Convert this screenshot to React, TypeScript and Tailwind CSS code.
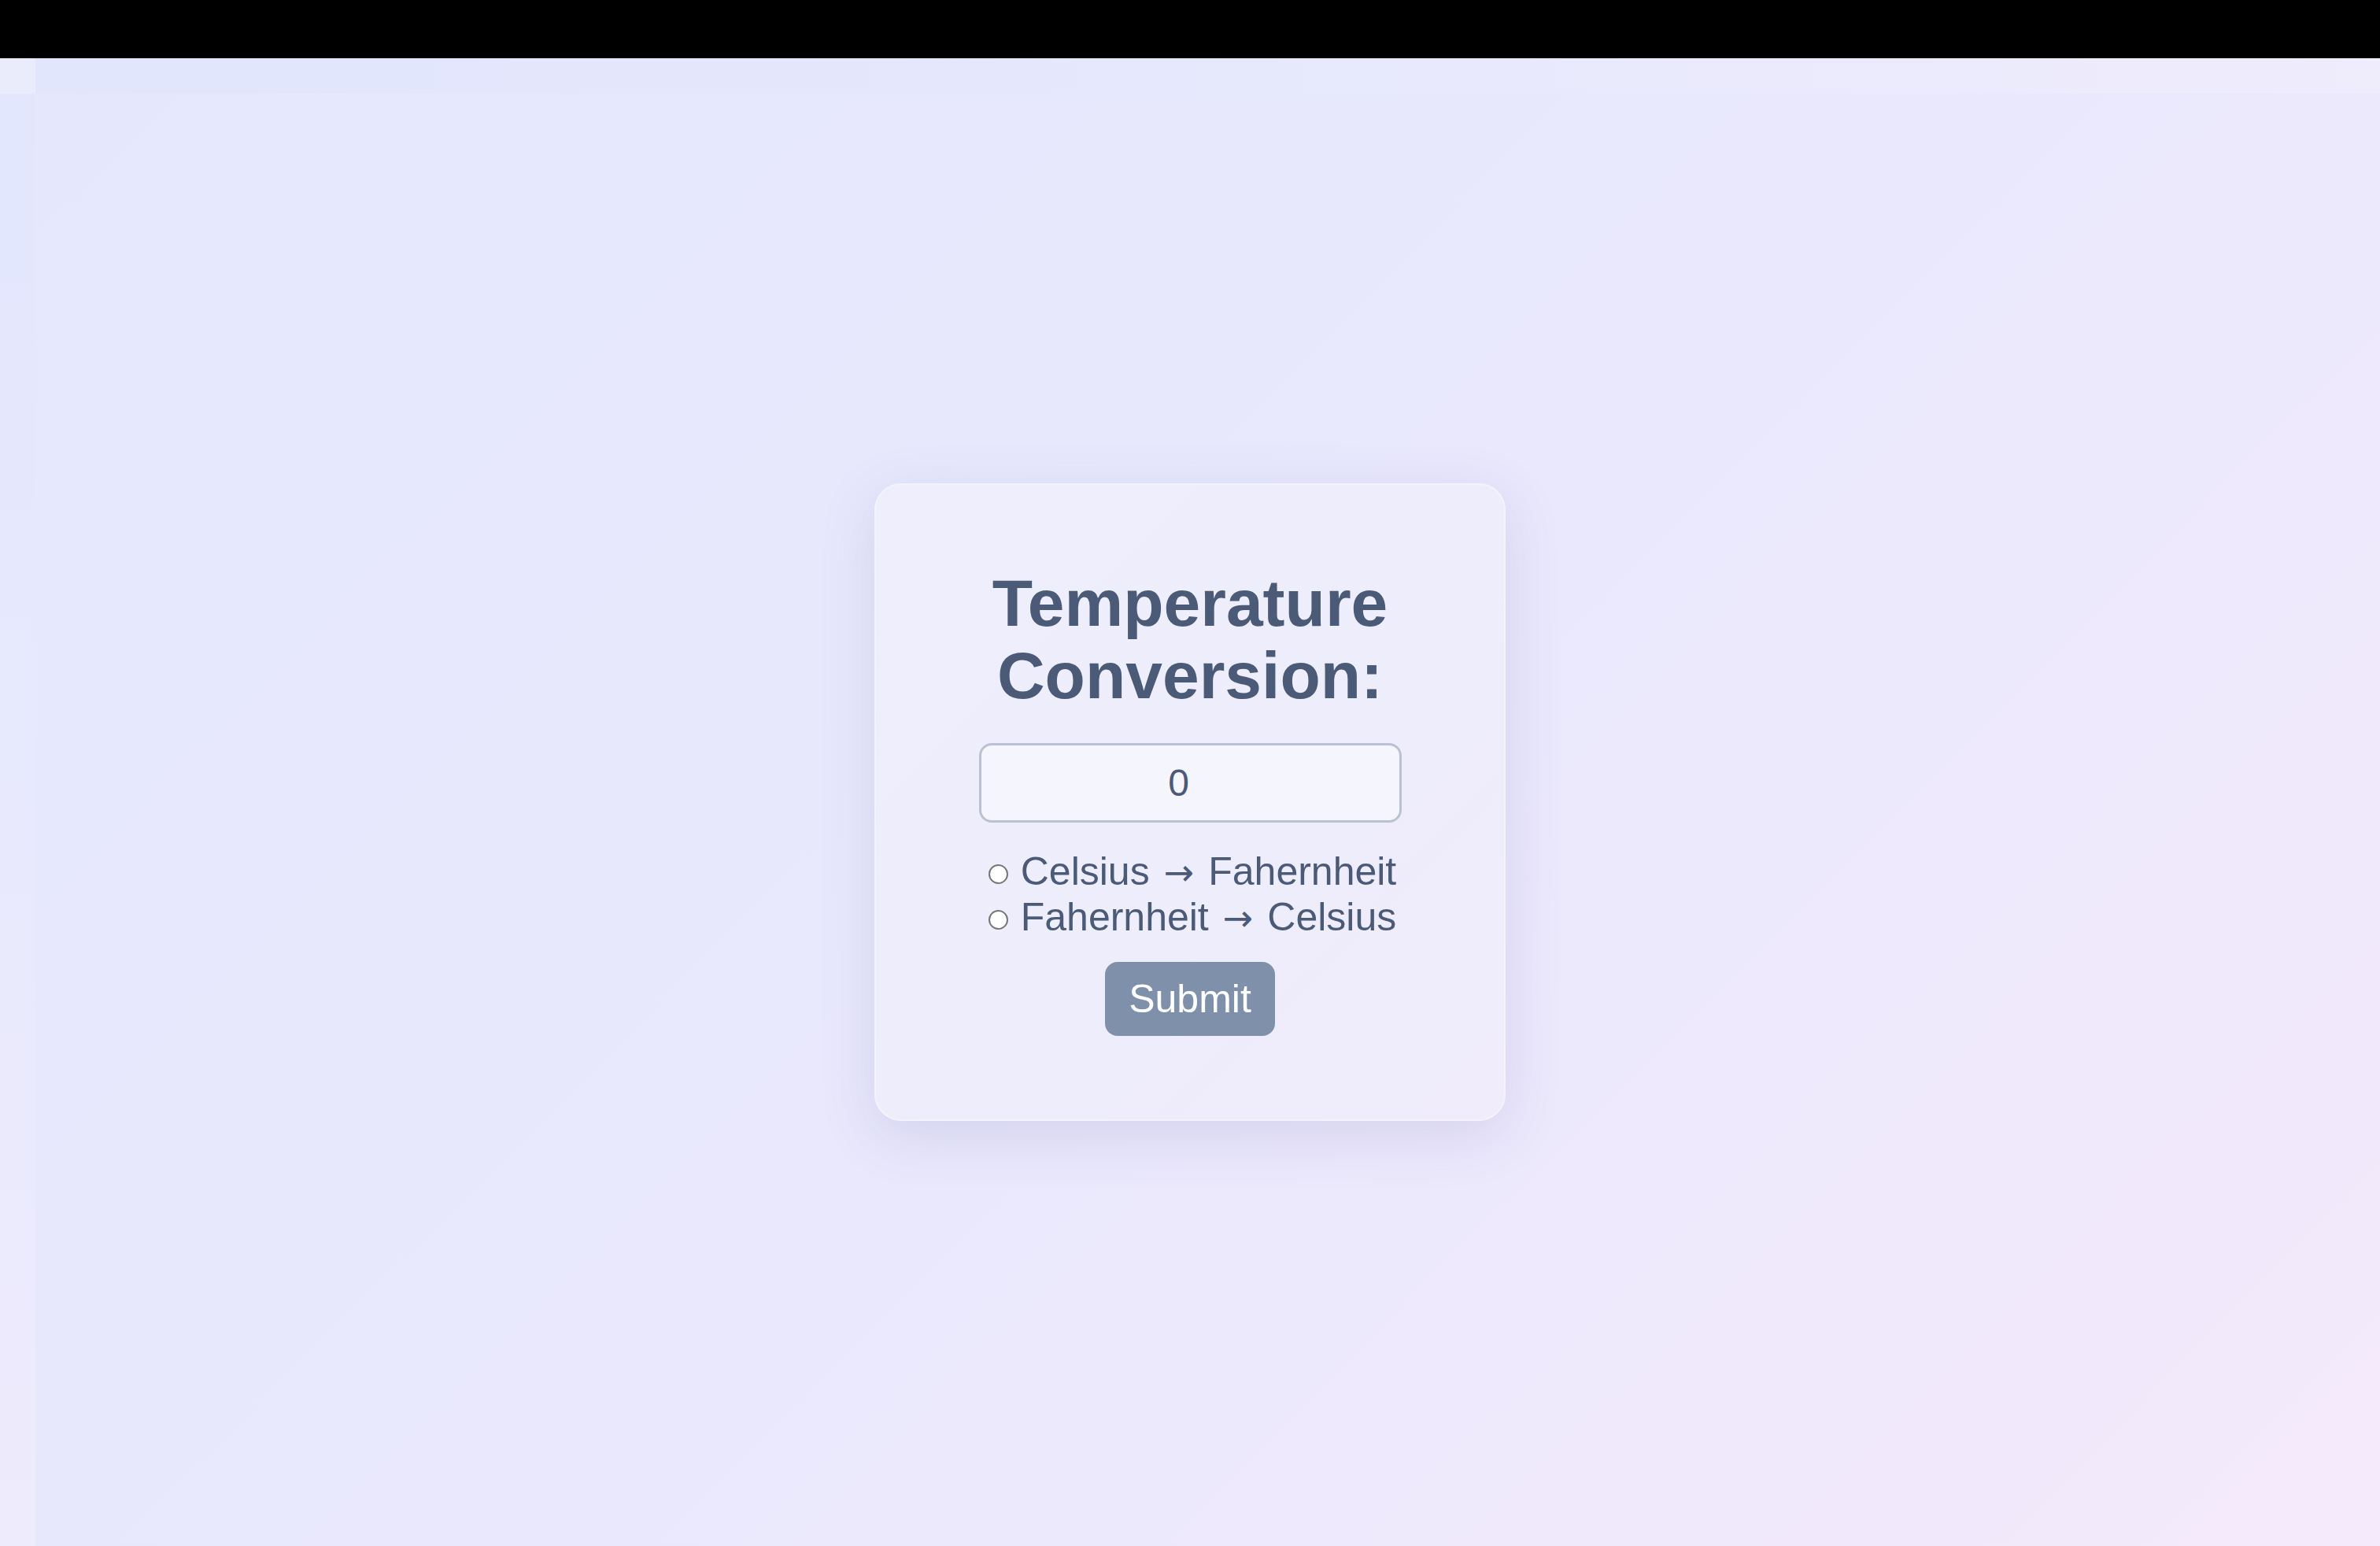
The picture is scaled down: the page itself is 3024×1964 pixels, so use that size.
import React from 'react';

const font = { fontFamily: '"Liberation Sans", Arial, Helvetica, sans-serif' };

export default function App() {
  const options = [
    ['Celsius', 'Fahernheit'],
    ['Fahernheit', 'Celsius'],
  ];

  return (
    <div className="w-[3024px] h-[1964px] flex flex-col overflow-hidden" style={font}>
      <div className="h-[74px] bg-black shrink-0" />

      <div className="relative flex-1 flex items-center justify-center bg-[linear-gradient(135deg,#e5e8fd_0%,#e9e8fc_50%,#f4eafb_100%)]">
        {/* offset strips along the top and left edges */}
        <div className="absolute top-0 left-0 w-[45px] h-[45px] bg-[#eaecfc]" />
        <div className="absolute top-0 left-[45px] right-0 h-[45px] bg-[linear-gradient(90deg,#e1e6fd_0%,#e6e8fc_50%,#efecfc_100%)]" />
        <div className="absolute top-[45px] left-0 bottom-0 w-[45px] bg-[linear-gradient(180deg,#e2e7fe_0%,#e8e9fc_50%,#eeebfc_100%)]" />

        <div className="relative w-[802px] h-[810px] rounded-[34px] border-2 border-[#f4f3fd] bg-[linear-gradient(135deg,#efeefc_0%,#eeedfb_60%,#f0ecfb_100%)] shadow-[0_18px_70px_rgba(96,96,170,0.16)] flex flex-col items-center pt-[104px]">
          <h1 className="text-[84px] leading-[92px] font-bold text-[#4b5a76] text-center">
            Temperature
            <br />
            Conversion:
          </h1>

          <input
            type="text"
            defaultValue="0"
            className="mt-[40px] w-[537px] h-[101px] rounded-[16px] border-[3px] border-[#b9c1d4] bg-[#f5f5fe] text-[48px] text-[#4b5a76] text-center pl-[12px] pr-[41px] outline-none"
            style={font}
          />

          <div className="mt-[33px] ml-[6px] flex flex-col">
            {options.map(([from, to]) => (
              <label key={from} className="flex items-center gap-[16px] text-[50px] leading-[58px] text-[#4b5a76]">
                <span className="mt-[6px] w-[25px] h-[25px] rounded-full border-2 border-[#767676] bg-white shrink-0" />
                <span>
                  {from}
                  <span className="mx-[18px] text-[46px] leading-none" style={{ fontFamily: '"DejaVu Sans", sans-serif' }}>→</span>
                  {to}
                </span>
              </label>
            ))}
          </div>

          <button className="mt-[28px] px-[30px] py-[18px] rounded-[16px] bg-[#7f90aa] text-white text-[50px] leading-[58px]" style={font}>
            Submit
          </button>
        </div>
      </div>
    </div>
  );
}
